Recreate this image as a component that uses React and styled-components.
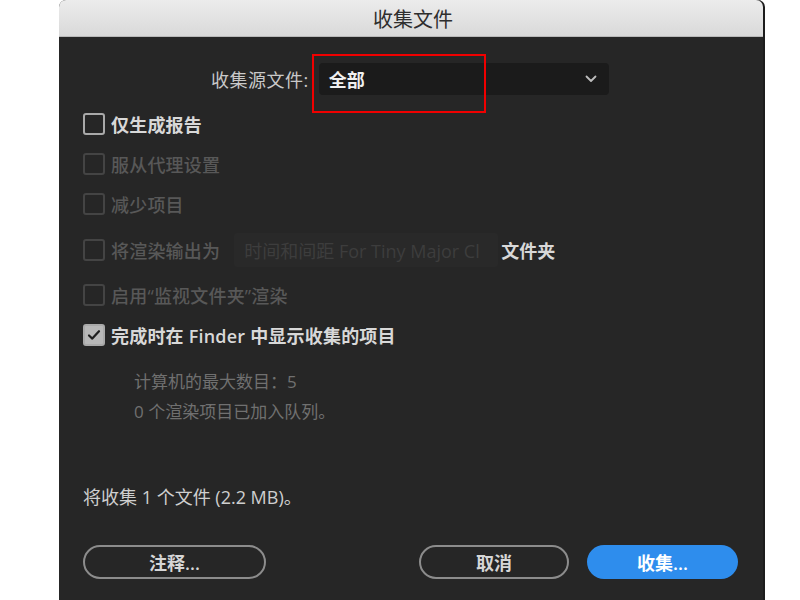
import React from "react";
import styled, { createGlobalStyle } from "styled-components";

const Global = createGlobalStyle`
  html, body { margin: 0; padding: 0; background: #ffffff; }
  body { font-family: "Open Sans", "Noto Sans CJK SC", sans-serif; }
`;

const Page = styled.div`
  width: 800px;
  height: 600px;
  overflow: hidden;
  display: flex;
  padding-left: 59px;
  box-sizing: border-box;
`;

const Dialog = styled.div`
  position: relative;
  width: 706px;
  height: 600px;
  background: #262626;
  border-right: 2px solid #1c1c1c;
  border-radius: 7px 7px 0 0;
  box-sizing: border-box;
  display: flex;
  flex-direction: column;
  font-family: "Open Sans", "Noto Sans CJK SC", sans-serif;
`;

const TitleBar = styled.div`
  height: 37px;
  flex: none;
  background: linear-gradient(#ececec, #d9d9d9);
  border-bottom: 1px solid #b9b9b9;
  border-radius: 7px 7px 0 0;
  box-sizing: border-box;
  display: flex;
  align-items: center;
  justify-content: center;
  font-size: 20px;
  color: #2e2e2e;
  padding-left: 4px;
`;

const Body = styled.div`
  display: flex;
  flex-direction: column;
  padding: 26px 0 0 24px;
`;

const SourceRow = styled.div`
  display: flex;
  align-items: center;
  gap: 10px;
  padding-left: 128px;
  margin-bottom: 9px;
`;

const FieldLabel = styled.span`
  font-size: 18px;
  color: #c9c9c9;
  letter-spacing: 0.5px;
`;

const Select = styled.div`
  width: 290px;
  height: 32px;
  box-sizing: border-box;
  background: #1b1b1b;
  border-radius: 4px;
  display: flex;
  align-items: center;
  justify-content: space-between;
  padding: 0 12px 0 10px;
  font-size: 18px;
  font-weight: 600;
  color: #f0f0f0;
`;

const Row = styled.div`
  display: flex;
  align-items: center;
  height: ${(p) => (p.$tall ? "46px" : "40px")};
  margin: ${(p) => (p.$tall ? "3px 0 2px" : "0")};
`;

const Box = styled.span`
  width: 22px;
  height: 22px;
  flex: none;
  box-sizing: border-box;
  border-radius: 3px;
  border: 2px solid ${(p) => (p.$disabled ? "#444444" : "#a9a9a9")};
  background: ${(p) => (p.$checked ? "#b8b8b8" : "transparent")};
  display: flex;
  align-items: center;
  justify-content: center;
  margin-right: 6px;
`;

const Label = styled.span`
  font-size: 18px;
  font-weight: ${(p) => (p.$disabled ? 500 : 600)};
  letter-spacing: 0.2px;
  white-space: nowrap;
  color: ${(p) => (p.$disabled ? "#585858" : "#d8d8d8")};
`;

const PathInput = styled.div`
  width: 264px;
  height: 34px;
  margin-left: 14px;
  box-sizing: border-box;
  background: #292929;
  border-radius: 3px;
  padding-left: 10px;
  display: flex;
  align-items: center;
  overflow: hidden;
  white-space: nowrap;
  font-size: 18px;
  color: #3d3d3d;
`;

const Suffix = styled.span`
  font-size: 18px;
  font-weight: 600;
  color: #d8d8d8;
  margin-left: 3px;
`;

const Info = styled.div`
  display: flex;
  flex-direction: column;
  padding-left: 51px;
  margin-top: 12px;
  line-height: 30px;
  font-size: 17px;
  color: #707070;
`;

const Summary = styled.div`
  margin-top: 55px;
  font-size: 18px;
  color: #cfcfcf;
  height: 30px;
  line-height: 30px;
`;

const Footer = styled.div`
  display: flex;
  align-items: center;
  padding: 0 25px 0 24px;
  margin-top: 33px;
`;

const Pill = styled.button`
  height: 34px;
  width: ${(p) => p.$w}px;
  box-sizing: border-box;
  border-radius: 17px;
  border: ${(p) => (p.$primary ? "none" : "2px solid #8c8c8c")};
  background: ${(p) => (p.$primary ? "#2e8ded" : "transparent")};
  color: ${(p) => (p.$primary ? "#ffffff" : "#d6d6d6")};
  font-family: "Open Sans", "Noto Sans CJK SC", sans-serif;
  font-size: 18px;
  font-weight: 600;
  margin-left: ${(p) => p.$ml || 0}px;
  padding: 0;
  display: flex;
  align-items: center;
  justify-content: center;
`;

const Spacer = styled.div`
  flex: 1;
`;

const Highlight = styled.div`
  position: absolute;
  left: 253px;
  top: 54px;
  width: 174px;
  height: 59px;
  border: 2px solid #f00000;
  box-sizing: border-box;
  pointer-events: none;
`;

const Chevron = () => (
  <svg width="12" height="8" viewBox="0 0 12 8">
    <path d="M1.5 1.5 L6 6 L10.5 1.5" fill="none" stroke="#bdbdbd" strokeWidth="1.8" strokeLinecap="round" strokeLinejoin="round" />
  </svg>
);

const Check = () => (
  <svg width="14" height="12" viewBox="0 0 14 12">
    <path d="M2 6.5 L5.3 9.6 L12 2.2" fill="none" stroke="#1e1e1e" strokeWidth="2.2" strokeLinecap="round" strokeLinejoin="round" />
  </svg>
);

const Option = ({ label, disabled, checked, tall, children }) => (
  <Row $tall={tall}>
    <Box $disabled={disabled} $checked={checked}>{checked && <Check />}</Box>
    <Label $disabled={disabled}>{label}</Label>
    {children}
  </Row>
);

export default function App() {
  return (
    <Page>
      <Global />
      <Dialog>
        <TitleBar>收集文件</TitleBar>
        <Body>
          <SourceRow>
            <FieldLabel>收集源文件:</FieldLabel>
            <Select>
              <span>全部</span>
              <Chevron />
            </Select>
          </SourceRow>
          <Option label="仅生成报告" />
          <Option label="服从代理设置" disabled />
          <Option label="减少项目" disabled />
          <Option label="将渲染输出为" disabled tall>
            <PathInput>时间和间距 For Tiny Major Cl</PathInput>
            <Suffix>文件夹</Suffix>
          </Option>
          <Option label="启用“监视文件夹”渲染" disabled />
          <Option label="完成时在 Finder 中显示收集的项目" checked />
          <Info>
            <span>计算机的最大数目：5</span>
            <span>0 个渲染项目已加入队列。</span>
          </Info>
          <Summary>将收集 1 个文件 (2.2 MB)。</Summary>
        </Body>
        <Footer>
          <Pill $w={183}>注释...</Pill>
          <Spacer />
          <Pill $w={150}>取消</Pill>
          <Pill $w={151} $ml={18} $primary>收集...</Pill>
        </Footer>
        <Highlight />
      </Dialog>
    </Page>
  );
}
